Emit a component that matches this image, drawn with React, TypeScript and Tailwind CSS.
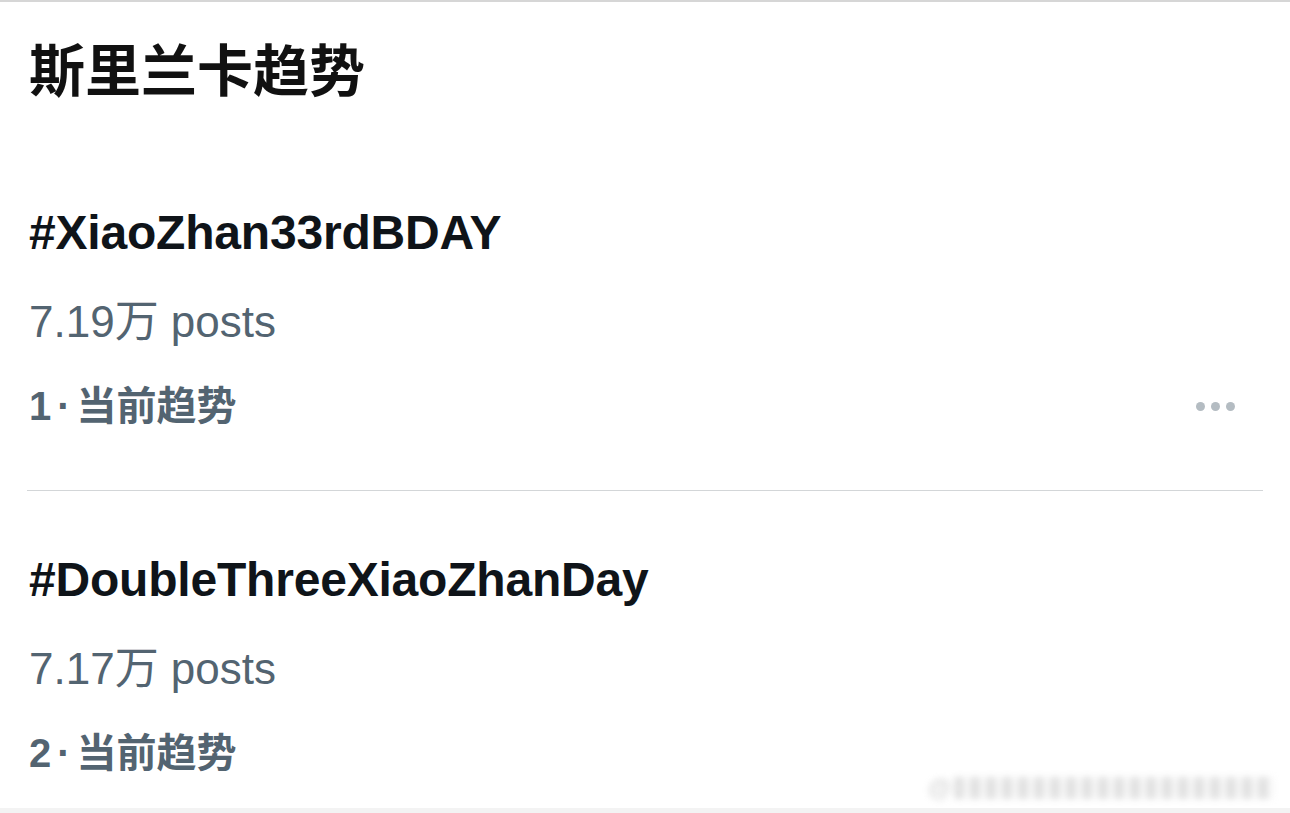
import React from "react";

const font = { fontFamily: '"Liberation Sans", "Noto Sans CJK SC", sans-serif' };

function Dots() {
  return (
    <div className="flex items-center gap-[6px]">
      <span className="block h-[9px] w-[9px] rounded-full bg-[#b4bcc2]" />
      <span className="block h-[9px] w-[9px] rounded-full bg-[#b4bcc2]" />
      <span className="block h-[9px] w-[9px] rounded-full bg-[#b4bcc2]" />
    </div>
  );
}

function Trend({ tag, posts, rank, dots, first }: { tag: string; posts: string; rank: string; dots?: boolean; first?: boolean }) {
  return (
    <div className={first ? "mt-[99px]" : "mt-[59px]"}>
      <div className="text-[48px] leading-[60px] font-bold text-[#0f1419] tracking-[-0.2px]">{tag}</div>
      <div className="mt-[29px] text-[44px] leading-[60px] text-[#536471]">{posts}</div>
      <div className="mt-[26px] flex items-center justify-between pr-[55px]">
        <div className="text-[40px] leading-[56px] font-bold text-[#536471]">
          {rank}
          <span className="mx-[6px]">·</span>当前趋势
        </div>
        {dots && <Dots />}
      </div>
    </div>
  );
}

export default function App() {
  return (
    <div className="relative h-[813px] w-[1290px] overflow-hidden bg-white" style={font}>
      <div className="h-[2px] w-full bg-[#d6d6d6]" />
      <div className="pl-[29px]">
        <div className="mt-[38px] text-[56px] leading-[64px] font-bold text-[#111111]">斯里兰卡趋势</div>
        <Trend first tag="#XiaoZhan33rdBDAY" posts="7.19万 posts" rank="1" dots />
        <div className="mt-[56px] mr-[27px] -ml-[2px] h-px bg-[#d3d6d8]" />
        <Trend tag="#DoubleThreeXiaoZhanDay" posts="7.17万 posts" rank="2" />
      </div>
      <div className="absolute left-[928px] top-[770px] flex items-center gap-[3px] blur-[3px] opacity-60">
        <span className="text-[24px] font-bold text-[#bbbbbb]">@</span>
        <span className="h-[22px] w-[320px] bg-[repeating-linear-gradient(90deg,#cfcfcf_0px,#cfcfcf_10px,#f4f4f4_10px,#f4f4f4_16px)]" />
      </div>
      <div className="absolute bottom-0 left-0 h-[5px] w-full bg-[#f3f3f3]" />
    </div>
  );
}
